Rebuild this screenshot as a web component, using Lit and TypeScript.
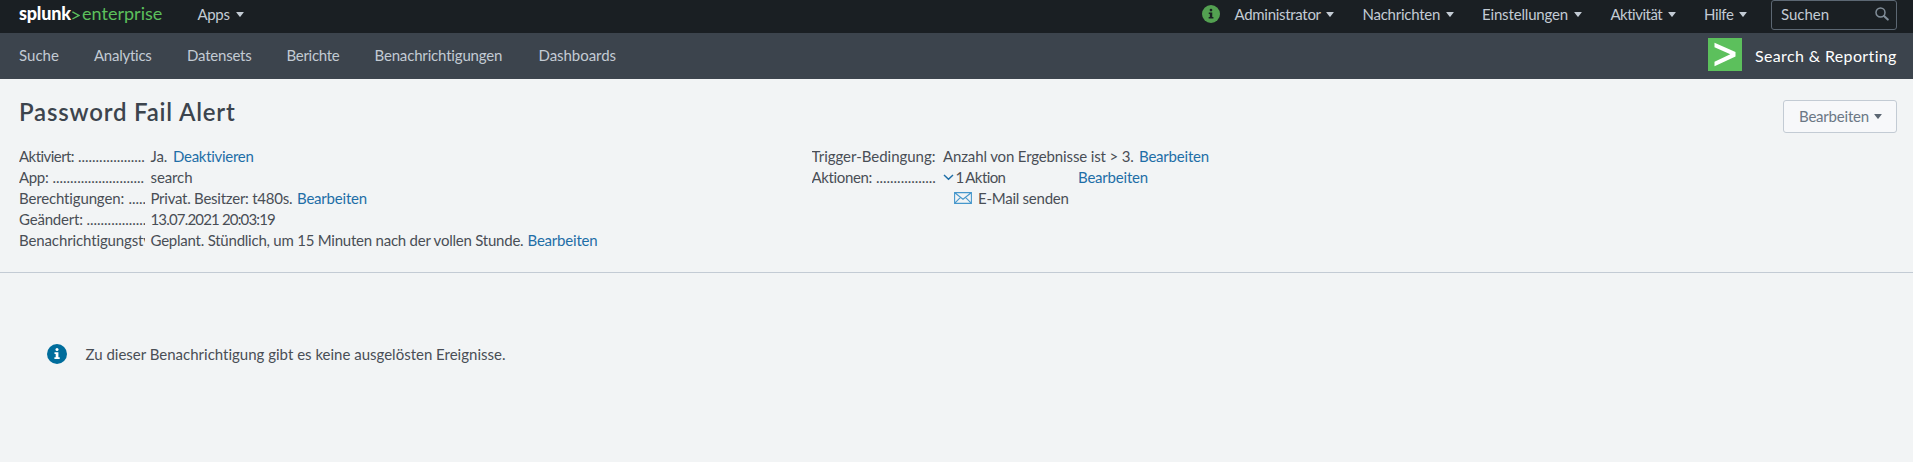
import { LitElement, html, svg, css } from "lit";
import { customElement, property } from "lit/decorators.js";

// A run of text with a fixed measure: label, width in px, tracking in px.
type Run = [text: string, width: number, tracking: number];

const run = ([text, width, tracking]: Run, cls = "") =>
  html`<span class="run ${cls}" style="width:${width}px;letter-spacing:${tracking}px">${text}</span>`;

const caret = html`<svg class="caret" viewBox="0 0 8 5" width="8" height="5"><path d="M0.6 0h6.8q.6 0 .2.5L4.5 4.6q-.5.6-1 0L.4.5Q0 0 .6 0z" fill="currentColor" /></svg>`;

const infoIcon = (size: number, fill: string, ink: string) => html`
  <svg viewBox="0 0 20 20" width=${size} height=${size}>
    ${svg`<circle cx="10" cy="10" r="10" fill=${fill} /><circle cx="10" cy="5.6" r="1.5" fill=${ink} /><path d="M7.5 8.2h3.9v5h1.3v1.7H7.4v-1.7h1.3V9.9H7.5z" fill=${ink} />`}
  </svg>`;

const shared = css`
  .run { display: inline-block; white-space: pre; flex: none; }
  svg { display: block; flex: none; }
`;

@customElement("top-bar")
class TopBar extends LitElement {
  static styles = [shared, css`
    :host { display: flex; box-sizing: border-box; height: 33px; padding: 4px 16px 0 19px; background: #1a1f23; color: #c3cbd4; align-items: flex-start; }
    .logo { display: flex; width: 178.5px; font-size: 18px; color: #5cc05c; line-height: 21px; margin-top: -1px; }
    .brand { font-weight: 900; color: #fff; }
    .arrow { margin: 8px 2px 0 0; }
    .item { display: flex; align-items: center; height: 21px; }
    .caret { margin: 0 0 0 5.5px; }
    .right { display: flex; margin-left: auto; gap: 28.5px; align-items: flex-start; }
    .user { display: flex; gap: 14.5px; align-items: flex-start; }
    .user > svg { margin-top: 1px; }
    .search { display: flex; box-sizing: border-box; width: 126px; height: 30px; margin: -4px 0 0 -4.5px; padding: 3px 7px 0 9px; border: 1px solid #5c6773; border-radius: 3px; justify-content: space-between; }
    .search svg { margin-top: 3px; }
  `];
  render() {
    const item = (r: Run) => html`<span class="item">${run(r)}${caret}</span>`;
    return html`
      <div class="logo">
        ${run(["splunk", 53, -0.2], "brand")}
        <svg class="arrow" width="8" height="9" viewBox="0 0 8 9"><path d="M.4 .8L7 4.4L.4 8" fill="none" stroke="#5cc05c" stroke-width="1.4" /></svg>
        ${run(["enterprise", 80, 0.02])}
      </div>
      ${item(["Apps", 33, -0.35])}
      <div class="right">
        <div class="user">${infoIcon(18, "#53a051", "#1a1f23")}${item(["Administrator", 86, -0.3])}</div>
        ${item(["Nachrichten", 77.5, -0.25])}
        ${item(["Einstellungen", 86.5, -0.16])}
        ${item(["Aktivität", 51.5, -0.5])}
        ${item(["Hilfe", 29.5, -0.4])}
        <div class="search">${run(["Suchen", 48, -0.03])}
          <svg width="14" height="14" viewBox="0 0 14 14"><circle cx="5.5" cy="5.5" r="4.5" fill="none" stroke="#818d99" stroke-width="1.5" /><path d="M9 9l3.8 3.6" stroke="#818d99" stroke-width="2" stroke-linecap="round" /></svg>
        </div>
      </div>`;
  }
}

@customElement("app-nav")
class AppNav extends LitElement {
  static styles = [shared, css`
    :host { display: flex; box-sizing: border-box; height: 46px; padding: 12px 16px 0 19px; background: #3c444d; color: #c3cbd4; }
    nav { display: flex; gap: 35px; }
    .app { display: flex; margin-left: auto; color: #fff; font-size: 16px; }
    .app svg { margin: -7px 13px 0 0; }
  `];
  render() {
    const links: Run[] = [["Suche", 40, 0.02], ["Analytics", 58, -0.26], ["Datensets", 64.5, -0.21], ["Berichte", 53, -0.28], ["Benachrichtigungen", 129, -0.17], ["Dashboards", 78, -0.05]];
    return html`<nav>${links.map((l) => run(l))}</nav>
      <div class="app">
        <svg width="34" height="33" viewBox="0 0 34 33"><rect width="34" height="33" fill="#5cc05c" /><path d="M6.5 4.8L27.5 14v4.4L6.5 28.2v-4.5L22.3 16.3L6.5 9.3z" fill="#fff" /></svg>
        ${run(["Search & Reporting", 142, 0.36])}
      </div>`;
  }
}

interface Row { label: Run; dots?: number; value: unknown; }

@customElement("detail-list")
class DetailList extends LitElement {
  @property({ attribute: false }) rows: Row[] = [];
  static styles = [shared, css`
    :host { display: block; padding-top: 1px; }
    .row { display: flex; height: 21px; gap: 5.5px; }
    .term { display: flex; overflow: hidden; flex: none; width: 126px; }
    .dots { letter-spacing: -0.02px; margin-left: 3.5px; }
    .value { display: flex; white-space: pre; }
    .link { color: #1e6ea7; }
    .link.first { margin-left: 5px; }
    .near { margin-left: 4.5px; }
    .far { margin-left: 71px; }
    .chev { margin: 7px 1.5px 0 0; }
    .mail { margin: 4px 6px 0 11px; }
    .action { word-spacing: -1px; }
  `];
  render() {
    return this.rows.map((r) => html`<div class="row">
      <div class="term">
        ${run(r.label)}${r.dots ? html`<span class="dots">${".".repeat(r.dots)}</span>` : ""}
      </div>
      <div class="value">${r.value}</div>
    </div>`);
  }
}

@customElement("app-root")
class AppRoot extends LitElement {
  static styles = [shared, css`
    :host { display: block; height: 462px; overflow: hidden; background: #f2f4f5; color: #494e55; font: 15px/21px Lato, "Open Sans", sans-serif; font-variant-ligatures: none; }
    .head { display: flex; box-sizing: border-box; height: 66px; padding: 21px 16px 0 19px; justify-content: space-between; align-items: flex-start; }
    h1 { margin: -4px 0 0; font-size: 24px; line-height: 32px; font-weight: 600; color: #3c444d; }
    .button { display: flex; box-sizing: border-box; width: 114px; height: 33px; padding: 5px 0 0 15px; border: 1px solid #c3cbd4; border-radius: 3px; background: #f7f8fa; color: #6b7785; font: inherit; text-align: left; }
    .button .caret { margin: 8px 0 0 5px; color: #5c6773; }
    .details { display: flex; box-sizing: border-box; height: 128px; padding-left: 19px; border-bottom: 1px solid #c3cbd4; }
    .left { width: 792.5px; }
    .message { display: flex; padding: 71px 0 0 46.5px; }
    .message svg { margin: 0 19px 0 0; }
  `];
  render() {
    const edit = (cls = "first") => run(["Bearbeiten", 70, -0.2], "link " + cls);
    const left: Row[] = [
      { label: ["Aktiviert:", 55.5, -0.55], dots: 19, value: html`${run(["Ja.", 18, -0.1])}${run(["Deaktivieren", 81, -0.29], "link near")}` },
      { label: ["App:", 30, -0.35], dots: 26, value: run(["search", 43, -0.1]) },
      { label: ["Berechtigungen:", 106, -0.15], dots: 5, value: html`${run(["Privat. Besitzer: t480s.", 142, -0.25])}${run(["Bearbeiten", 70, -0.2], "link near")}` },
      { label: ["Geändert:", 64, -0.2], dots: 17, value: run(["13.07.2021 20:03:19", 126, -0.83]) },
      { label: ["Benachrichtigungstyp:", 152, -0.12], value: html`${run(["Geplant. Stündlich, um 15 Minuten nach der vollen Stunde.", 372, -0.23])}${edit()}` },
    ];
    const chevron = html`<svg class="chev" width="11" height="7" viewBox="0 0 11 7"><path d="M1 1l4.5 4.2L10 1" fill="none" stroke="#1e6ea7" stroke-width="1.5" /></svg>`;
    const mail = html`<svg class="mail" width="18" height="12" viewBox="0 0 18 12"><path d="M.6.6h16.8v10.8H.6zM.8.8L9 7.2L17.2.8M.8 11.2l5.7-5.8M17.2 11.2l-5.7-5.8" fill="none" stroke="#4697cc" stroke-width="1.1" /></svg>`;
    const right: Row[] = [
      { label: ["Trigger-Bedingung:", 124, -0.02], value: html`${run(["Anzahl von Ergebnisse ist > 3.", 191, -0.14])}${edit()}` },
      { label: ["Aktionen:", 61, -0.35], dots: 17, value: html`${chevron}${run(["1 Aktion", 51.5, -0.6], "action")}${edit("far")}` },
      { label: ["", 0, 0], value: html`${mail}${run(["E-Mail senden", 91, -0.25])}` },
    ];
    return html`
      <top-bar></top-bar>
      <app-nav></app-nav>
      <div class="head">
        <h1>${run(["Password Fail Alert", 220, 0.8])}</h1>
        <button class="button">${run(["Bearbeiten", 70, -0.2])}${caret}</button>
      </div>
      <div class="details">
        <detail-list class="left" .rows=${left}></detail-list>
        <detail-list .rows=${right}></detail-list>
      </div>
      <div class="message">${infoIcon(20, "#006d9c", "#fff")}${run(["Zu dieser Benachrichtigung gibt es keine ausgelösten Ereignisse.", 423, 0])}</div>`;
  }
}
